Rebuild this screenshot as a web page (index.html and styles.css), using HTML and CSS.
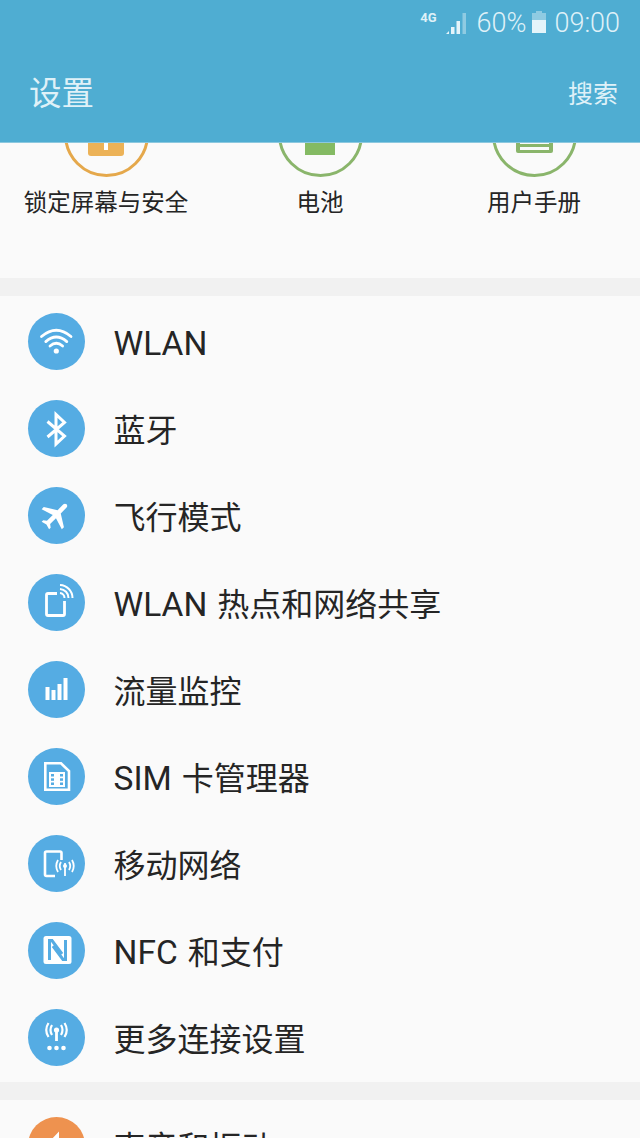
FILE: index.html
```html
<html>
<head>
<meta charset="utf-8">
<title>设置</title>
<link rel="stylesheet" href="styles.css">
</head>
<body>

<div class='header'>
  <div class='status'>
    <span class='net'>4G</span>
    <svg class='signal' width="21" height="22" viewBox="0 0 21 22">
      <path d="M0 22 L3 19 V22 Z" fill="#e4f4fa"/>
      <rect x="5" y="15" width="3.5" height="7" fill="#e4f4fa"/>
      <rect x="10.5" y="9" width="3.5" height="13" fill="#e4f4fa"/>
      <rect x="16.5" y="1" width="3.5" height="21" fill="#8fcbe2"/>
    </svg>
    <span class='percent'>60%</span>
    <svg class='battery' width="14" height="22" viewBox="0 0 14 22">
      <path d="M4 0 H10 V2 H14 V9 H0 V2 H4 Z" fill="#8fcbe2"/>
      <rect x="0" y="9" width="14" height="13" fill="#e4f4fa"/>
    </svg>
    <span class='clock'>09:00</span>
  </div>
  <div class='bar'>
    <h1>设置</h1>
    <span class='search'>搜索</span>
  </div>
</div>

<div class='shortcuts'>
  <div class='shortcut'>
    <div class='crop'>
      <div class='ring orange'><div class='lock'><i></i></div></div>
    </div>
    <span>锁定屏幕与安全</span>
  </div>
  <div class='shortcut'>
    <div class='crop'>
      <div class='ring green'><div class='cell'></div></div>
    </div>
    <span>电池</span>
  </div>
  <div class='shortcut'>
    <div class='crop'>
      <div class='ring green'>
        <svg class='book' width="37" height="30" viewBox="0 0 37 30">
          <path fill="#8ab56b" d="M0 0 H37 V28 Q37 30 35 30 H2 Q0 30 0 28 Z"/>
          <rect x="4" y="0" width="29" height="21" fill="#fafafa"/>
          <rect x="4" y="21" width="29" height="3" fill="#8ab56b"/>
          <rect x="4" y="24" width="29" height="3" fill="#fafafa"/>
        </svg>
      </div>
    </div>
    <span>用户手册</span>
  </div>
</div>

<div class='list'>
  <div class='row'>
    <div class='icon'>
      <svg width="57" height="57" viewBox="0 0 57 57" fill="none" stroke="#fff" stroke-width="2.8" stroke-linecap="round">
        <path d="M13.500 23.500 Q28.300 11 43 23.500"/>
        <path d="M17.800 28.600 Q28.300 19.500 38.800 28.600"/>
        <path d="M22 33 Q28.300 27.500 34.600 33"/>
        <circle cx="28.300" cy="38" r="2.600" fill="#fff" stroke="none"/>
      </svg>
    </div>
    <span class='name'><em>WLAN</em></span>
  </div>
  <div class='row'>
    <div class='icon'>
      <svg width="57" height="57" viewBox="0 0 57 57" fill="none" stroke="#fff" stroke-width="3">
        <path d="M19.500 21.500 L36.500 36 L28 44 V14.500 L36.500 22.500 L19.500 37"/>
      </svg>
    </div>
    <span class='name'>蓝牙</span>
  </div>
  <div class='row'>
    <div class='icon'>
      <svg width="57" height="57" viewBox="0 0 57 57">
        <path transform="rotate(45 28.500 28.500) translate(10.500 10.500) scale(1.500)" fill="#fff" d="M21 16v-2l-8-5V3.500c0-.83-.67-1.500-1.500-1.500S10 2.670 10 3.500V9l-8 5v2l8-2.500V19l-2 1.500V22l3.500-1 3.500 1v-1.500L13 19v-5.500l8 2.500z"/>
      </svg>
    </div>
    <span class='name'>飞行模式</span>
  </div>
  <div class='row'>
    <div class='icon'>
      <svg width="57" height="57" viewBox="0 0 57 57" fill="none" stroke="#fff" stroke-width="2.800">
        <path d="M29 19.500 H20 Q18.500 19.500 18.500 21 V40 Q18.500 41.500 20 41.500 H35 Q36.500 41.500 36.500 40 V27"/>
        <path stroke-width="2" d="M32 19 A5 5 0 0 1 36.500 24"/>
        <path stroke-width="2" d="M32 15 A9 9 0 0 1 40.500 24"/>
        <path stroke-width="2" d="M32 11 A13 13 0 0 1 44.500 24"/>
      </svg>
    </div>
    <span class='name'><em>WLAN</em> 热点和网络共享</span>
  </div>
  <div class='row'>
    <div class='icon'>
      <svg width="57" height="57" viewBox="0 0 57 57" fill="#fff">
        <rect x="17.500" y="26" width="4" height="13"/>
        <rect x="23.500" y="29" width="4" height="10"/>
        <rect x="29.500" y="23" width="4" height="16"/>
        <rect x="35.500" y="17" width="4" height="22"/>
      </svg>
    </div>
    <span class='name'>流量监控</span>
  </div>
  <div class='row'>
    <div class='icon'>
      <svg width="57" height="57" viewBox="0 0 57 57">
        <path fill="none" stroke="#fff" stroke-width="2.600" d="M18.500 15.300 H33 L41 23 V41.700 H17.300 V15.300 Z"/>
        <rect x="21" y="24" width="16" height="15" fill="#fff"/>
        <g fill="#55ace3">
          <rect x="23" y="26" width="3" height="2.500"/>
          <rect x="23" y="30.300" width="3" height="2.500"/>
          <rect x="23" y="34.500" width="3" height="2.500"/>
          <rect x="32" y="26" width="3" height="2.500"/>
          <rect x="32" y="30.300" width="3" height="2.500"/>
          <rect x="32" y="34.500" width="3" height="2.500"/>
        </g>
      </svg>
    </div>
    <span class='name'><em>SIM</em> 卡管理器</span>
  </div>
  <div class='row'>
    <div class='icon'>
      <svg width="57" height="57" viewBox="0 0 57 57" fill="none" stroke="#fff" stroke-width="2.600">
        <path d="M27 41 H18.500 Q17 41 17 39.500 V18 Q17 16.500 18.500 16.500 H32 Q33.500 16.500 33.500 18 V25"/>
        <path stroke-width="1.800" d="M37 28 V41"/>
        <circle cx="37" cy="31" r="2" fill="#fff" stroke="none"/>
        <path stroke-width="1.800" d="M33 27 Q30.500 31 33 35 M41 27 Q43.500 31 41 35 M30 25 Q26.500 31 30 37 M44 25 Q47.500 31 44 37"/>
      </svg>
    </div>
    <span class='name'>移动网络</span>
  </div>
  <div class='row'>
    <div class='icon'>
      <svg width="57" height="57" viewBox="0 0 57 57">
        <rect x="15.500" y="14" width="28" height="28" rx="2.500" fill="#fff"/>
        <path fill="none" stroke="#55ace3" stroke-width="3" d="M21.500 38 V18.500 H24 L34 32"/>
        <path fill="none" stroke="#55ace3" stroke-width="3" d="M37.500 18 V37.500 H35 L25 24"/>
      </svg>
    </div>
    <span class='name'><em>NFC</em> 和支付</span>
  </div>
  <div class='row'>
    <div class='icon'>
      <svg width="57" height="57" viewBox="0 0 57 57" fill="none" stroke="#fff" stroke-width="2.200">
        <path stroke-width="2.800" d="M28.500 22 V32"/>
        <circle cx="28.500" cy="21" r="2.600" fill="#fff" stroke="none"/>
        <path d="M24 16 Q21 21 24 26 M33 16 Q36 21 33 26 M20.500 14 Q16 21 20.500 28 M36.500 14 Q41 21 36.500 28"/>
        <g fill="#fff" stroke="none">
          <circle cx="21.500" cy="39" r="2.300"/>
          <circle cx="28.500" cy="39" r="2.300"/>
          <circle cx="35.500" cy="39" r="2.300"/>
        </g>
      </svg>
    </div>
    <span class='name'>更多连接设置</span>
  </div>
</div>

<div class='list'>
  <div class='row'>
    <div class='icon sound'>
      <svg width="57" height="57" viewBox="0 0 57 57" fill="#fff">
        <path d="M16 24 H22 L31 14.500 V41 L22 33 H16 Z"/>
      </svg>
    </div>
    <span class='name'>声音和振动</span>
  </div>
</div>

</body>
</html>
```

FILE: styles.css
```css
html, body{
  height:1138px;
  overflow:hidden;
}
body{
  margin:0px;
  background:#f1f1f1;
  font-family:"Roboto","Noto Sans CJK SC",sans-serif;
  color:#252525;
}

.header{
  position:relative;
  z-index:2;
  height:142px;
  background:#4fadd2;
  border-bottom:1px solid #8cc8df;
  color:#dff1f8;
}

.status{
  display:flex;
  justify-content:flex-end;
  align-items:flex-start;
  height:44px;
  padding:10px 20px 0px 0px;
  box-sizing:border-box;
}
.status .net{
  font-size:13px;
  line-height:13px;
  font-weight:700;
  margin:1px 9px 0px 0px;
}
.status .signal{
  margin:2px 10px 0px 0px;
}
.status .percent, .status .clock{
  font-size:27px;
  line-height:26px;
  font-weight:300;
}
.status .battery{
  margin:1px 8px 0px 6px;
}

.bar{
  display:flex;
  justify-content:space-between;
  align-items:center;
  height:97px;
  padding:0px 22px 0px 29px;
}
.bar h1{
  margin:0px;
  padding-bottom:4px;
  font-size:32.5px;
  font-weight:400;
}
.bar .search{
  padding-bottom:2px;
  font-size:25px;
}

.shortcuts{
  display:grid;
  grid-template-columns:214px 214px 214px;
  justify-content:center;
  height:135px;
  background:#fafafa;
  margin-bottom:18px;
}
.shortcut{
  display:flex;
  flex-direction:column;
  align-items:center;
}
.shortcut span{
  font-size:23.5px;
  line-height:34px;
  margin-top:9px;
  white-space:nowrap;
}
.crop{
  height:34px;
  display:flex;
  align-items:flex-end;
  overflow:hidden;
}
.ring{
  flex:none;
  width:85px;
  height:85px;
  border-radius:50%;
  box-sizing:border-box;
  border:3px solid;
  display:flex;
  justify-content:center;
  align-items:flex-end;
  padding-bottom:18px;
}
.ring.orange{
  border-color:#e5a84b;
}
.ring.green{
  border-color:#8ab56b;
}
.lock{
  width:36px;
  height:30px;
  background:#ecb257;
  border-radius:3px;
  display:flex;
  justify-content:center;
  align-items:flex-end;
}
.lock i{
  display:block;
  width:4px;
  height:24px;
  margin-bottom:6px;
  background:#fff;
}
.cell{
  width:30px;
  height:30px;
  margin-bottom:1px;
  background:#84ba63;
}
.book{
  display:block;
  margin-bottom:3px;
}

.list{
  background:#fafafa;
  padding:2px 0px 1px 0px;
  margin-bottom:18px;
}
.row{
  display:flex;
  align-items:center;
  height:87px;
  padding-left:28px;
}
.name{
  font-size:32px;
  line-height:44px;
  margin-left:28.5px;
  padding-top:4px;
  white-space:nowrap;
}
.name em{
  font-style:normal;
  font-size:33.5px;
  margin-right:2px;
}
.icon{
  flex:none;
  width:57px;
  height:57px;
  border-radius:50%;
  background:#55ace3;
}
.icon svg{
  display:block;
}
.icon.sound{
  background:#ee924f;
}
```
